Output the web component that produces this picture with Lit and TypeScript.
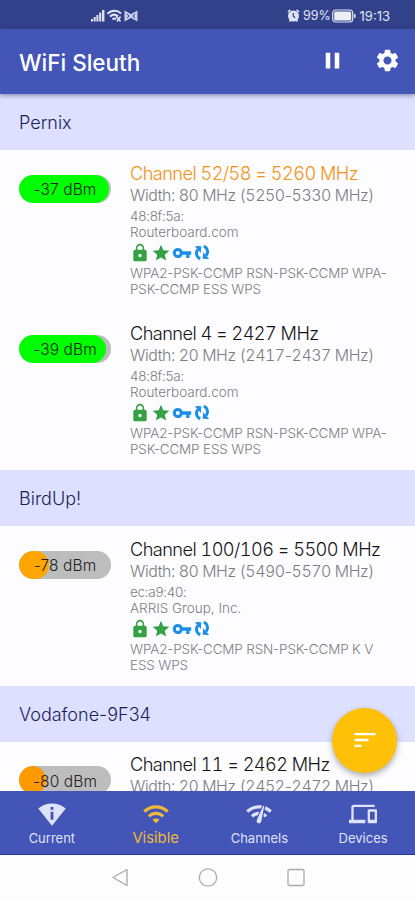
import { LitElement, html, css, svg } from "lit";
import { customElement, property } from "lit/decorators.js";

interface AccessPoint {
  level: number;
  fill: number;
  color: string;
  channel: string;
  width: number;
  range: [number, number];
  mac: string;
  vendor: string;
  caps: string[];
  connected?: boolean;
}

interface Network {
  name: string;
  points: AccessPoint[];
}

const NETWORKS: Network[] = [
  {
    name: "Pernix",
    points: [
      {
        level: -37, fill: 90, color: "#0f0", connected: true,
        channel: "Channel 52/58 = 5260 MHz", width: 80, range: [5250, 5330],
        mac: "48:8f:5a:", vendor: "Routerboard.com",
        caps: ["WPA2-PSK-CCMP RSN-PSK-CCMP WPA-", "PSK-CCMP ESS WPS"],
      },
      {
        level: -39, fill: 87, color: "#0f0",
        channel: "Channel 4 = 2427 MHz", width: 20, range: [2417, 2437],
        mac: "48:8f:5a:", vendor: "Routerboard.com",
        caps: ["WPA2-PSK-CCMP RSN-PSK-CCMP WPA-", "PSK-CCMP ESS WPS"],
      },
    ],
  },
  {
    name: "BirdUp!",
    points: [
      {
        level: -78, fill: 30, color: "#ffa600",
        channel: "Channel 100/106 = 5500 MHz", width: 80, range: [5490, 5570],
        mac: "ec:a9:40:", vendor: "ARRIS Group, Inc.",
        caps: ["WPA2-PSK-CCMP RSN-PSK-CCMP K V", "ESS WPS"],
      },
    ],
  },
  {
    name: "Vodafone-9F34",
    points: [
      {
        level: -80, fill: 27, color: "#ff9900",
        channel: "Channel 11 = 2462 MHz", width: 20, range: [2452, 2472],
        mac: "", vendor: "", caps: [],
      },
    ],
  },
];

const ICONS = {
  pause: svg`<path d="M6 19h4V5H6v14zm8-14v14h4V5h-4z"/>`,
  gear: svg`<path d="M19.14 12.94c.04-.3.06-.61.06-.94 0-.32-.02-.64-.07-.94l2.03-1.58c.18-.14.23-.41.12-.61l-1.92-3.32c-.12-.22-.37-.29-.59-.22l-2.39.96c-.5-.38-1.03-.7-1.62-.94l-.36-2.54c-.04-.24-.24-.41-.48-.41h-3.84c-.24 0-.43.17-.47.41l-.36 2.54c-.59.24-1.13.57-1.62.94l-2.39-.96c-.22-.08-.47 0-.59.22L2.74 8.87c-.12.21-.08.47.12.61l2.03 1.58c-.05.3-.09.63-.09.94s.02.64.07.94l-2.03 1.58c-.18.14-.23.41-.12.61l1.92 3.32c.12.22.37.29.59.22l2.39-.96c.5.38 1.03.7 1.62.94l.36 2.54c.05.24.24.41.48.41h3.84c.24 0 .44-.17.47-.41l.36-2.54c.59-.24 1.13-.56 1.62-.94l2.39.96c.22.08.47 0 .59-.22l1.92-3.32c.12-.22.07-.47-.12-.61l-2.01-1.58zM12 15.6c-1.98 0-3.6-1.62-3.6-3.6s1.62-3.6 3.6-3.6 3.6 1.62 3.6 3.6-1.62 3.6-3.6 3.6z"/>`,
  lock: svg`<path d="M18 8h-1V6c0-2.76-2.24-5-5-5S7 3.24 7 6v2H6c-1.1 0-2 .9-2 2v10c0 1.1.9 2 2 2h12c1.1 0 2-.9 2-2V10c0-1.1-.9-2-2-2zm-6 9c-1.1 0-2-.9-2-2s.9-2 2-2 2 .9 2 2-.9 2-2 2zm3.1-9H8.9V6c0-1.71 1.39-3.1 3.1-3.1s3.1 1.39 3.1 3.1v2z"/>`,
  star: svg`<path d="M12 17.27L18.18 21l-1.64-7.03L22 9.24l-7.19-.61L12 2 9.19 8.63 2 9.24l5.46 4.73L5.82 21z"/>`,
  key: svg`<path d="M12.65 10A5.99 5.99 0 0 0 7 6c-3.31 0-6 2.69-6 6s2.69 6 6 6a5.99 5.99 0 0 0 5.65-4H17v4h4v-4h2v-4H12.65zM7 14.4a2.4 2.4 0 1 1 0-4.8 2.4 2.4 0 0 1 0 4.8z"/>`,
  wps: svg`<g fill="none" stroke="currentColor" stroke-width="4"><path d="M9.500 20.500C4.500 18 3 12.500 6.500 8"/><path d="M14.500 3.500C19.500 6 21 11.500 17.500 16"/></g><path d="M2.500 3.200L11 3.700 10.500 12.500zM21.500 20.800L13 20.300 13.500 11.500z"/>`,
  sort: svg`<path d="M3 18h6v-2H3v2zM3 6v2h18V6H3zm0 7h12v-2H3v2z"/>`,
  info: svg`<path fill-rule="evenodd" d="M12 3C7.500 3 3.200 4.600.2 7.300L12 22 23.800 7.300C20.800 4.600 16.500 3 12 3zM10.800 6h2.400v2.300h-2.400zM10.800 10h2.400v7h-2.400z"/>`,
  wifi: svg`<path d="M1 9l2 2c4.970-4.970 13.030-4.970 18 0l2-2C16.930 2.930 7.080 2.930 1 9zm8 8l3 3 3-3c-1.650-1.660-4.340-1.660-6 0zm-4-4l2 2c2.760-2.760 7.240-2.760 10 0l2-2C15.140 9.140 8.870 9.140 5 13z"/>`,
  check: svg`<path d="M15.9 5c-.17 0-.32.09-.41.23l-.07.15-5.18 11.65c-.16.29-.26.61-.26.96 0 1.11.9 2.01 2.01 2.01.96 0 1.77-.68 1.96-1.59l.01-.03L16.400 5.500c0-.28-.22-.5-.5-.5zM1 9l2 2c2.880-2.880 6.790-4.080 10.530-3.620l1.190-2.680C9.890 3.840 4.740 5.270 1 9zm20 2l2-2c-1.640-1.640-3.550-2.820-5.590-3.570l-.53 2.820c1.500.62 2.900 1.530 4.120 2.750zm-4 4l2-2c-.8-.8-1.700-1.420-2.660-1.890l-.55 2.920c.42.27.83.59 1.210.97zM5 13l2 2c1.130-1.130 2.560-1.790 4.030-2l1.280-2.880c-2.630-.08-5.300.87-7.310 2.880z"/>`,
  devices: svg`<path d="M4 6h18V4H4c-1.100 0-2 .9-2 2v11H0v3h14v-3H4V6zm19 2h-6c-.55 0-1 .45-1 1v10c0 .55.45 1 1 1h6c.55 0 1-.45 1-1V9c0-.55-.45-1-1-1zm-1 9h-4v-7h4v7z"/>`,
};

type IconName = keyof typeof ICONS;

@customElement("wifi-icon")
class WifiIcon extends LitElement {
  @property() name: IconName = "star";
  static styles = css`
    :host { display: block; flex: none; }
    svg { display: block; width: 100%; height: 100%; fill: currentColor; }
  `;
  render() {
    return html`<svg viewBox="0 0 24 24" aria-hidden="true">${ICONS[this.name]}</svg>`;
  }
}

@customElement("signal-row")
class SignalRow extends LitElement {
  @property({ attribute: false }) point!: AccessPoint;
  static styles = css`
    :host { display: flex; height: 160px; box-sizing: border-box; padding: 10.500px 0 0 19px; color: #7e7d82; white-space: nowrap; }
    .pill { flex: none; display: grid; width: 92px; height: 28px; margin: 14px 19px 0 0; border-radius: 14px; background: #bdbdbd; overflow: hidden; }
    .bar, .level { grid-area: 1 / 1; }
    .bar { border-radius: 14px; }
    .level { display: flex; align-items: center; justify-content: center; font-size: 15.500px; letter-spacing: 0.1px; color: #222; padding-top: 2px; }
    .channel { font-size: 18.200px; line-height: 24px; color: #151515; letter-spacing: -0.570px; font-variant-numeric: tabular-nums; }
    .channel.connected { color: #f39312; }
    .width { font-size: 15.900px; line-height: 22px; letter-spacing: -0.420px; font-variant-numeric: tabular-nums; }
    .dash { font-variant-numeric: normal; }
    .small { font-size: 13.500px; line-height: 16.400px; }
    .small.mac { padding-top: 1px; letter-spacing: -0.300px; }
    .small.caps { letter-spacing: -0.160px; }
    .icons { display: flex; align-items: center; height: 24.500px; }
    .green { color: #34a244; }
    .blue { color: #188ee8; }
    .i { width: 20px; height: 20px; margin-right: 1px; }
    .wps { width: 18px; height: 19px; margin-left: 0; }
  `;
  render() {
    const p = this.point;
    return html`
      <div class="pill">
        <div class="bar" style="width:${p.fill}px;background:${p.color}"></div>
        <div class="level">${p.level} dBm</div>
      </div>
      <div>
        <div class="channel ${p.connected ? "connected" : ""}">${p.channel}</div>
        <div class="width">Width: ${p.width} MHz (${p.range[0]}<span class="dash">-</span>${p.range[1]} MHz)</div>
        <div class="small mac">${p.mac}</div>
        <div class="small">${p.vendor}</div>
        <div class="icons">
          <wifi-icon class="i green" name="lock"></wifi-icon>
          <wifi-icon class="i green" name="star"></wifi-icon>
          <wifi-icon class="i blue" name="key"></wifi-icon>
          <wifi-icon class="wps blue" name="wps"></wifi-icon>
        </div>
        ${p.caps.map((line) => html`<div class="small caps">${line}</div>`)}
      </div>
    `;
  }
}

@customElement("app-root")
class AppRoot extends LitElement {
  static styles = css`
    :host { display: flex; flex-direction: column; position: relative; height: 900px; overflow: hidden; background: #fdfcff; font-family: Inter, Roboto, sans-serif; font-weight: 300; }
    .status { flex: none; height: 29px; box-sizing: border-box; display: flex; align-items: center; padding: 2px 25px 0 90px; background: #32428a; color: #e0e4f4; font-size: 12.500px; font-weight: 400; }
    .signals { width: 48px; height: 14px; margin-right: auto; }
    .alarm { width: 13px; height: 13px; margin-right: 3px; }
    .battery { width: 24px; height: 14px; margin: 0 4px 0 1px; }
    .percent { letter-spacing: -0.1px; }
    .clock { font-size: 13px; }
    .appbar { flex: none; z-index: 1; height: 65px; box-sizing: border-box; display: flex; align-items: center; padding: 2px 14px 0 19px; background: #4355b7; color: #fff; box-shadow: 0 2px 4px rgba(40, 40, 80, 0.4); }
    .title { flex: 1; font-size: 22.500px; font-weight: 500; }
    .pause { width: 27px; height: 27px; margin: -4px 28px 0 0; }
    .gear { width: 27px; height: 27px; margin-top: -4px; }
    .list { flex: 1; min-height: 0; overflow: hidden; }
    .header { height: 56px; box-sizing: border-box; display: flex; align-items: center; padding: 1px 0 0 19px; background: #dee0ff; color: #1c1e5c; font-size: 18px; }
    .header:last-of-type { height: 55.500px; }
    .tabs { flex: none; height: 64px; display: grid; grid-template-columns: repeat(4, 1fr); background: #4355b7; color: #dfe2fb; border-bottom: 1px solid #2337a3; box-sizing: border-box; }
    .tab { display: flex; flex-direction: column; align-items: center; padding-top: 9px; font-size: 13px; font-weight: 400; line-height: 18px; }
    .tab-icon { width: 28px; height: 28px; margin-bottom: 1px; }
    .active { color: #efb93a; font-size: 14.800px; }
    .system { flex: none; height: 45px; display: flex; justify-content: center; align-items: center; gap: 68px; background: #fdfdfd; }
    .system svg { width: 20px; height: 20px; margin-top: -1px; fill: none; stroke: #aaa; stroke-width: 1.300; stroke-linejoin: round; }
    .fab { position: absolute; right: 18px; bottom: 127.500px; width: 65px; height: 65px; border-radius: 50%; display: flex; align-items: center; justify-content: center; background: #ffc008; color: #fff; box-shadow: 0 3px 6px rgba(0, 0, 0, 0.32); }
    .fab-icon { width: 28px; height: 28px; }
  `;
  render() {
    const tabs: [string, IconName][] = [["Current", "info"], ["Visible", "wifi"], ["Channels", "check"], ["Devices", "devices"]];
    return html`
      <div class="status">
        <svg class="signals" viewBox="0 0 48 14" fill="currentColor">
          <path d="M1 10h2v2.500H1zM3.700 8h2v4.500h-2zM6.400 6h2v6.500h-2zM9.200 3.500h2v9h-2zM12 1h2.400v11.500H12z"/>
          <g fill="none" stroke="currentColor" stroke-width="2"><path d="M17.500 4.800C21.500.8 27.500.8 31 4.500M20 7.600c2.500-2.500 5.500-2.400 8-.3M22.500 10.400c1.200-1.100 2.500-1 3.500 0"/><path d="M26 7l4.500 5.500M30.500 7.500l-3.500 5" stroke-width="1.500"/></g>
          <path d="M34.500 1.500L41 5l6.500-3.500v11L41 9l-6.500 3.500z" opacity=".85"/>
          <path d="M37 5l2 2-2 2M45 5l-2 2 2 2" fill="none" stroke="#32428a"/>
        </svg>
        <svg class="alarm" viewBox="0 0 13 13"><circle cx="6.500" cy="7" r="5.500" fill="currentColor"/><path d="M.8 3L3.500.8M12.200 3L9.500.8M2.500 12.500l1-1.500M10.500 12.500l-1-1.500" stroke="currentColor" stroke-width="1.600"/><path d="M6.300 4v3.300l2 1.500" fill="none" stroke="#32428a" stroke-width="1.200"/></svg>
        <span class="percent">99%</span>
        <svg class="battery" viewBox="0 0 24 14"><rect x=".7" y="1" width="20" height="12" rx="3" fill="none" stroke="currentColor" stroke-width="1.200"/><rect x="2.200" y="2.500" width="17" height="9" rx="1.500" fill="#eef0f4"/><path d="M22.700 5v4" stroke="currentColor" stroke-width="1.500"/></svg>
        <span class="clock">19:13</span>
      </div>
      <div class="appbar">
        <div class="title">WiFi Sleuth</div>
        <wifi-icon class="pause" name="pause"></wifi-icon>
        <wifi-icon class="gear" name="gear"></wifi-icon>
      </div>
      <div class="list">
        ${NETWORKS.map((n) => html`
          <div class="header">${n.name}</div>
          ${n.points.map((p) => html`<signal-row .point=${p}></signal-row>`)}
        `)}
      </div>
      <div class="tabs">
        ${tabs.map(([label, icon]) => html`
          <div class="tab ${label === "Visible" ? "active" : ""}">
            <wifi-icon class="tab-icon" name=${icon}></wifi-icon>
            <span>${label}</span>
          </div>
        `)}
      </div>
      <div class="system">
        <svg viewBox="0 0 20 20"><path d="M3 10.500L17 2.500v16z"/></svg>
        <svg viewBox="0 0 20 20"><circle cx="10" cy="10.500" r="8.700"/></svg>
        <svg viewBox="0 0 20 20"><rect x="2" y="2.500" width="16" height="16" rx="1.500"/></svg>
      </div>
      <div class="fab"><wifi-icon class="fab-icon" name="sort"></wifi-icon></div>
    `;
  }
}
